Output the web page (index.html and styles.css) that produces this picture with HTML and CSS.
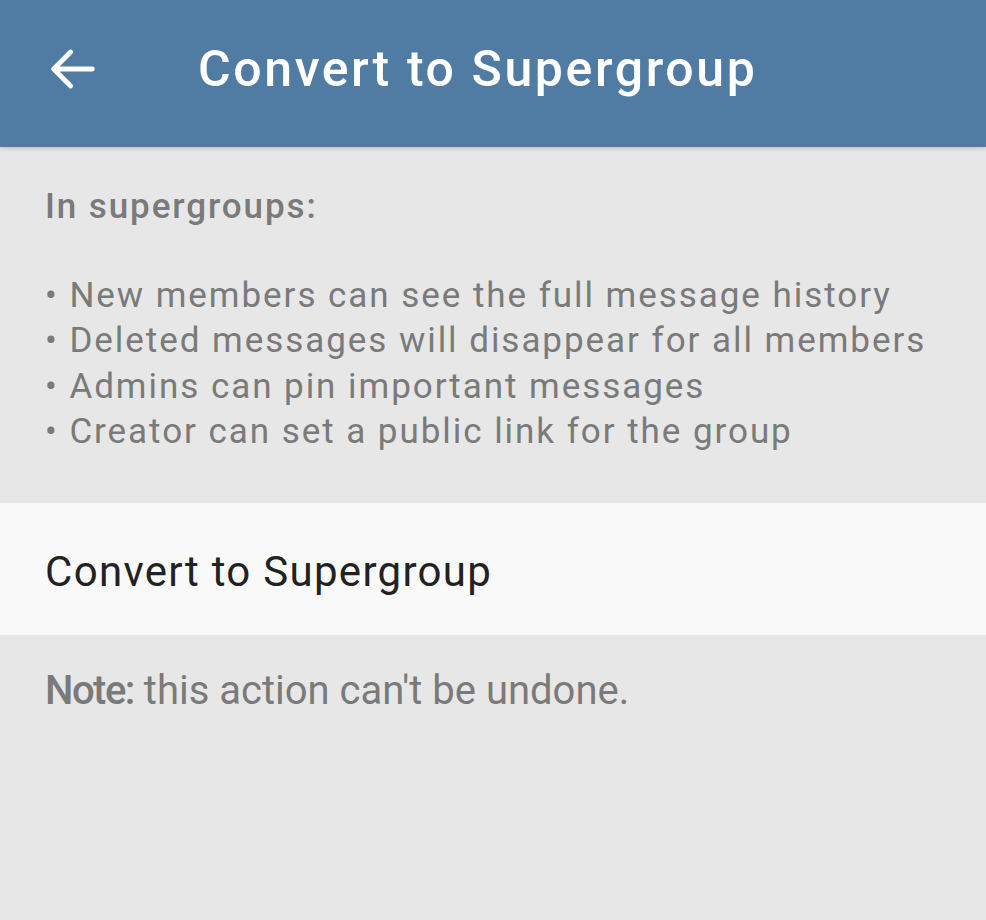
FILE: index.html
```html
<!DOCTYPE html>
<html lang="en">

<head>
  <link rel="stylesheet" href="styles.css">
</head>

<body>
  <div class="toolbar">
    <div class="back-btn">
      <svg width="58" height="58" viewBox="0 0 24 24">
        <path d="M20 12H4M11 5L4 12L11 19" fill="none" stroke="#fff" stroke-width="2" stroke-linecap="round" stroke-linejoin="round"/>
      </svg>
    </div>
    <div class="toolbar-title">Convert to Supergroup</div>
  </div>

  <div class="info">
    <div class="info-head">In supergroups:</div>
    <div class="blank"></div>
    <div class="bullet">• New members can see the full message history</div>
    <div class="bullet">• Deleted messages will disappear for all members</div>
    <div class="bullet">• Admins can pin important messages</div>
    <div class="bullet">• Creator can set a public link for the group</div>
  </div>

  <div class="action-row">
    <span class="action-text">Convert to Supergroup</span>
  </div>

  <div class="note">
    <b>Note:</b> this action can't be undone.
  </div>
</body>

</html>
```

FILE: styles.css
```css
body {
  font-family: Roboto, 'Noto Sans', sans-serif;
  background-color: #e7e7e7;
  margin: 0;
  height: 920px;
  overflow: hidden;
}

.toolbar {
  display: flex;
  align-items: center;
  height: 147px;
  padding-left: 44px;
  background-color: #507ca4;
  box-shadow: 0 2px 4px rgba(0, 0, 0, 0.15);
  position: relative;
}

.back-btn {
  display: flex;
  width: 154px;
  margin-top: -10px;
}

.toolbar-title {
  margin-top: -10px;
  color: #fff;
  font-size: 50px;
  font-weight: 500;
  letter-spacing: 2.6px;
}

.info {
  padding: 37px 45px 48px;
  color: #7a7a7a;
  font-size: 35px;
  line-height: 45.5px;
}

.info-head {
  font-weight: 500;
  letter-spacing: 1.9px;
}

.bullet {
  letter-spacing: 1.95px;
}

.blank {
  height: 43px;
}

.action-row {
  display: flex;
  align-items: center;
  height: 132px;
  padding: 0 45px;
  background-color: #f9f9f9;
}

.action-text {
  margin-top: 5px;
  color: #222;
  font-size: 42px;
  letter-spacing: 1.3px;
}

.note {
  padding: 33px 45px;
  color: #7a7a7a;
  font-size: 40px;
  line-height: 46px;
}

.note b {
  font-weight: 500;
  letter-spacing: -1.5px;
}
```
